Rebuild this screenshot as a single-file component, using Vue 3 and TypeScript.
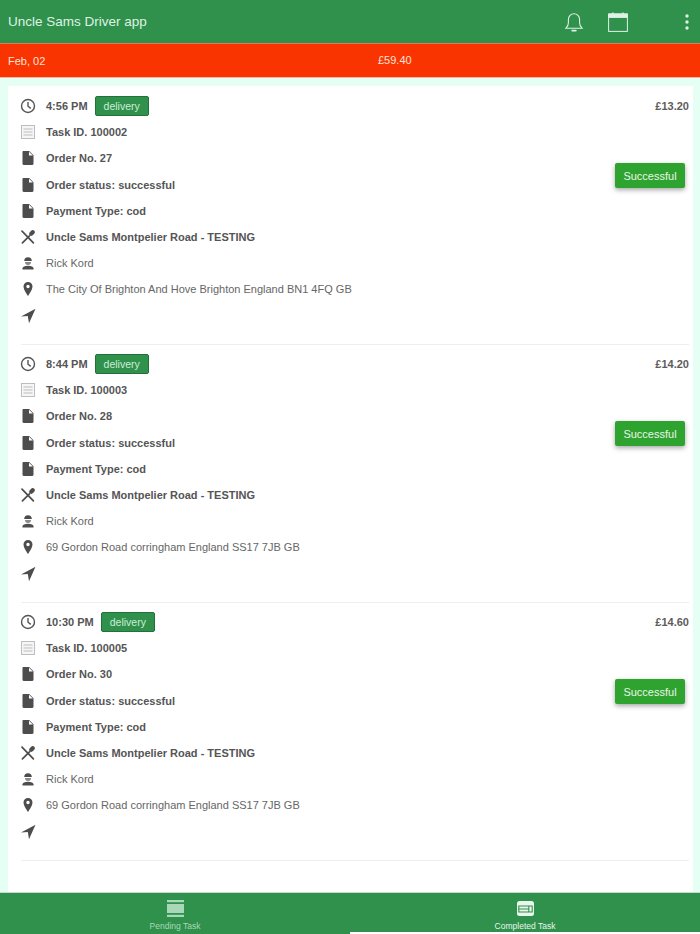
<script setup lang="ts">
interface Task {
  time: string
  price: string
  id: number
  order: number
  address: string
}

const tasks: Task[] = [
  { time: '4:56 PM', price: '£13.20', id: 100002, order: 27, address: 'The City Of Brighton And Hove Brighton England BN1 4FQ GB' },
  { time: '8:44 PM', price: '£14.20', id: 100003, order: 28, address: '69 Gordon Road corringham England SS17 7JB GB' },
  { time: '10:30 PM', price: '£14.60', id: 100005, order: 30, address: '69 Gordon Road corringham England SS17 7JB GB' }
]

const docPath = 'M3.5 1h5.7l4.3 4.3v8.5c0 .7-.5 1.2-1.2 1.2H3.7c-.7 0-1.2-.5-1.2-1.2V2c0-.6.4-1 1-1zM9 1.8v3.8h3.9z'
</script>

<template>
  <div class="page">
    <header class="topbar">
      <span class="title">Uncle Sams Driver app</span>
      <div class="top-icons">
        <svg class="bell" viewBox="0 0 20 22" width="20" height="22" fill="none" stroke="currentColor" stroke-width="1.1">
          <path d="M2 17.2c1.6-1.5 2.4-3 2.4-5.4V8.4a5.6 5.6 0 0 1 11.2 0v3.4c0 2.4.8 3.9 2.4 5.4z" />
          <path d="M8.2 19.6h3.6" stroke-width="1.8" stroke-linecap="round" />
        </svg>
        <svg class="calendar" viewBox="0 0 20 20" width="20" height="20" fill="none" stroke="currentColor" stroke-width="1">
          <rect x="0.6" y="2" width="18.8" height="17.4" />
          <path d="M0.6 2h18.8v3.4H0.6z" fill="currentColor" />
          <path d="M5 .4v2M15 .4v2" stroke-width="1.4" />
        </svg>
        <svg class="dots" viewBox="0 0 4 16" width="4" height="16" fill="currentColor">
          <circle cx="2" cy="2" r="1.7" />
          <circle cx="2" cy="8" r="1.7" />
          <circle cx="2" cy="14" r="1.7" />
        </svg>
      </div>
    </header>

    <div class="datebar">
      <span class="date">Feb, 02</span>
      <span class="total">£59.40</span>
    </div>

    <main class="content">
      <section v-for="task in tasks" :key="task.id" class="task">
        <div class="price">{{ task.price }}</div>
        <button class="success">Successful</button>

        <div class="row bold">
          <svg class="ic" viewBox="0 0 16 16" fill="none" stroke="#555" stroke-width="1.4">
            <circle cx="8" cy="8" r="6.5" />
            <path d="M8 4v4.2l2.8 2.2" />
          </svg>
          <span>{{ task.time }}</span>
          <span class="badge">delivery</span>
        </div>
        <div class="row bold">
          <svg class="ic" viewBox="0 0 16 16" fill="#f6f6f6" stroke="#bdbdbd" stroke-width="1">
            <rect x="1.5" y="1.5" width="13" height="13" />
            <path d="M3.5 5h9M3.5 8h9M3.5 11h9" />
          </svg>
          <span>Task ID. {{ task.id }}</span>
        </div>
        <div class="row bold">
          <svg class="ic" viewBox="0 0 16 16" fill="#4d4d4d"><path :d="docPath" fill-rule="evenodd" /></svg>
          <span>Order No. {{ task.order }}</span>
        </div>
        <div class="row bold">
          <svg class="ic" viewBox="0 0 16 16" fill="#4d4d4d"><path :d="docPath" fill-rule="evenodd" /></svg>
          <span>Order status: successful</span>
        </div>
        <div class="row bold">
          <svg class="ic" viewBox="0 0 16 16" fill="#4d4d4d"><path :d="docPath" fill-rule="evenodd" /></svg>
          <span>Payment Type: cod</span>
        </div>
        <div class="row bold">
          <svg class="ic" viewBox="0 0 16 16" fill="none" stroke="#4d4d4d" stroke-width="1.7" stroke-linecap="round">
            <path d="M2 2.2l11.4 11.6M9.5 6.8L2.4 13.8" />
            <ellipse cx="12" cy="4" rx="2.2" ry="3.2" transform="rotate(45 12 4)" fill="#4d4d4d" stroke="none" />
          </svg>
          <span>Uncle Sams Montpelier Road - TESTING</span>
        </div>
        <div class="row">
          <svg class="ic" viewBox="0 0 16 16" fill="#4d4d4d">
            <path d="M4.2 6a3.8 3.8 0 0 1 7.6 0z" />
            <path d="M5 7h6a3 3 0 0 1-6 0z" fill="#8a8a8a" />
            <path d="M2.5 14.5v-1.3c0-1.4 2.4-2.4 5.5-2.4s5.500 1 5.500 2.4v1.300z" />
          </svg>
          <span>Rick Kord</span>
        </div>
        <div class="row">
          <svg class="ic" viewBox="0 0 16 16" fill="#4d4d4d">
            <path fill-rule="evenodd" d="M8 1a4.5 4.5 0 0 0-4.5 4.5C3.5 8.8 8 15 8 15s4.5-6.2 4.5-9.5A4.5 4.5 0 0 0 8 1zm0 2.8a1.7 1.7 0 1 1 0 3.4 1.7 1.7 0 0 1 0-3.4z" />
          </svg>
          <span>{{ task.address }}</span>
        </div>
        <div class="row">
          <svg class="ic" viewBox="0 0 16 16" fill="#4d4d4d">
            <path d="M15.5 .8L1 8.500l6.800-.5L9 15.200z" />
          </svg>
        </div>
      </section>
    </main>

    <nav class="tabs">
      <div class="tab">
        <svg class="tab-ic" viewBox="0 0 17 17" width="17" height="17" fill="currentColor">
          <rect width="17" height="2.2" />
          <rect y="4" width="17" height="9" />
          <rect y="14.8" width="17" height="2.2" />
        </svg>
        <span>Pending Task</span>
      </div>
      <div class="tab active">
        <svg class="tab-ic" viewBox="0 0 17 15" width="17" height="15">
          <rect width="17" height="15" rx="2.5" fill="currentColor" />
          <path d="M1.8 5h13.400v6H1.800zM1.800 8h10M11.800 5v6" fill="none" stroke="#2f914b" stroke-width="1.1" />
        </svg>
        <span>Completed Task</span>
      </div>
    </nav>
  </div>
</template>

<style scoped>
.page {
  width: 700px;
  height: 934px;
  display: flex;
  flex-direction: column;
  overflow: hidden;
  background: #e6fff5;
  font-family: "Liberation Sans", Arial, sans-serif;
  color: #4b4b4b;
}

.topbar {
  height: 43px;
  flex: none;
  display: flex;
  align-items: center;
  justify-content: space-between;
  background: #2f914b;
  color: #dff2e5;
  border-bottom: 1px solid #e0775a;
  padding: 0 11px 0 8px;
}

.title {
  font-size: 13.5px;
}

.top-icons {
  display: flex;
  align-items: center;
}

.bell {
  margin-right: 24px;
}

.calendar {
  margin-right: 57px;
}

.datebar {
  height: 33px;
  flex: none;
  display: flex;
  align-items: center;
  position: relative;
  background: #f93400;
  color: #ffe3d8;
  font-size: 11px;
  padding: 0 8px;
  border-bottom: 1px solid #f6b9a2;
}

.total {
  position: absolute;
  left: 378px;
  top: 10px;
}

.content {
  flex: 1;
  min-height: 0;
  margin: 8px 7px 0 8px;
  padding: 1px 4px 0 13px;
  background: #fff;
}

.task {
  position: relative;
  height: 258px;
  box-sizing: border-box;
  padding-top: 6px;
  border-bottom: 1px solid #eeeeee;
}

.row {
  height: 26.2px;
  display: flex;
  align-items: center;
  font-size: 11px;
  color: #666;
}

.row.bold {
  font-weight: bold;
  color: #555;
}

.ic {
  width: 16px;
  height: 16px;
  flex: none;
  margin: 0 10px 0 -1px;
}

.badge {
  margin-left: 7px;
  padding: 0 8px;
  height: 20px;
  line-height: 19px;
  box-sizing: border-box;
  background: #2f914b;
  border: 1px solid #24703a;
  border-radius: 2px;
  color: #cdeed8;
  font-size: 10.5px;
  font-weight: normal;
}

.price {
  position: absolute;
  right: 0;
  top: 13px;
  font-size: 11px;
  font-weight: bold;
  color: #5c5c5c;
}

.success {
  position: absolute;
  right: 4px;
  top: 76px;
  width: 70px;
  height: 25px;
  border: none;
  border-radius: 2px;
  padding: 0;
  background: #2fa32f;
  color: #e8f6e8;
  font-family: inherit;
  font-size: 11px;
  box-shadow: 0 2px 5px rgba(0, 0, 0, 0.35);
}

.tabs {
  height: 42px;
  flex: none;
  display: flex;
  background: #2f914b;
  border-top: 1px solid #c4dccb;
  box-sizing: border-box;
}

.tab {
  flex: 1;
  display: flex;
  flex-direction: column;
  align-items: center;
  padding-top: 8px;
  box-sizing: border-box;
  color: #a9d8b9;
  font-size: 8.5px;
}

.tab span {
  margin-top: 4px;
}

.tab-ic {
  flex: none;
  margin-top: -1px;
}

.tab.active {
  color: #e8f6ed;
  box-shadow: inset 0 -2px 0 #fff;
}

.tab.active .tab-ic {
  margin: 0 0 1px;
}
</style>
